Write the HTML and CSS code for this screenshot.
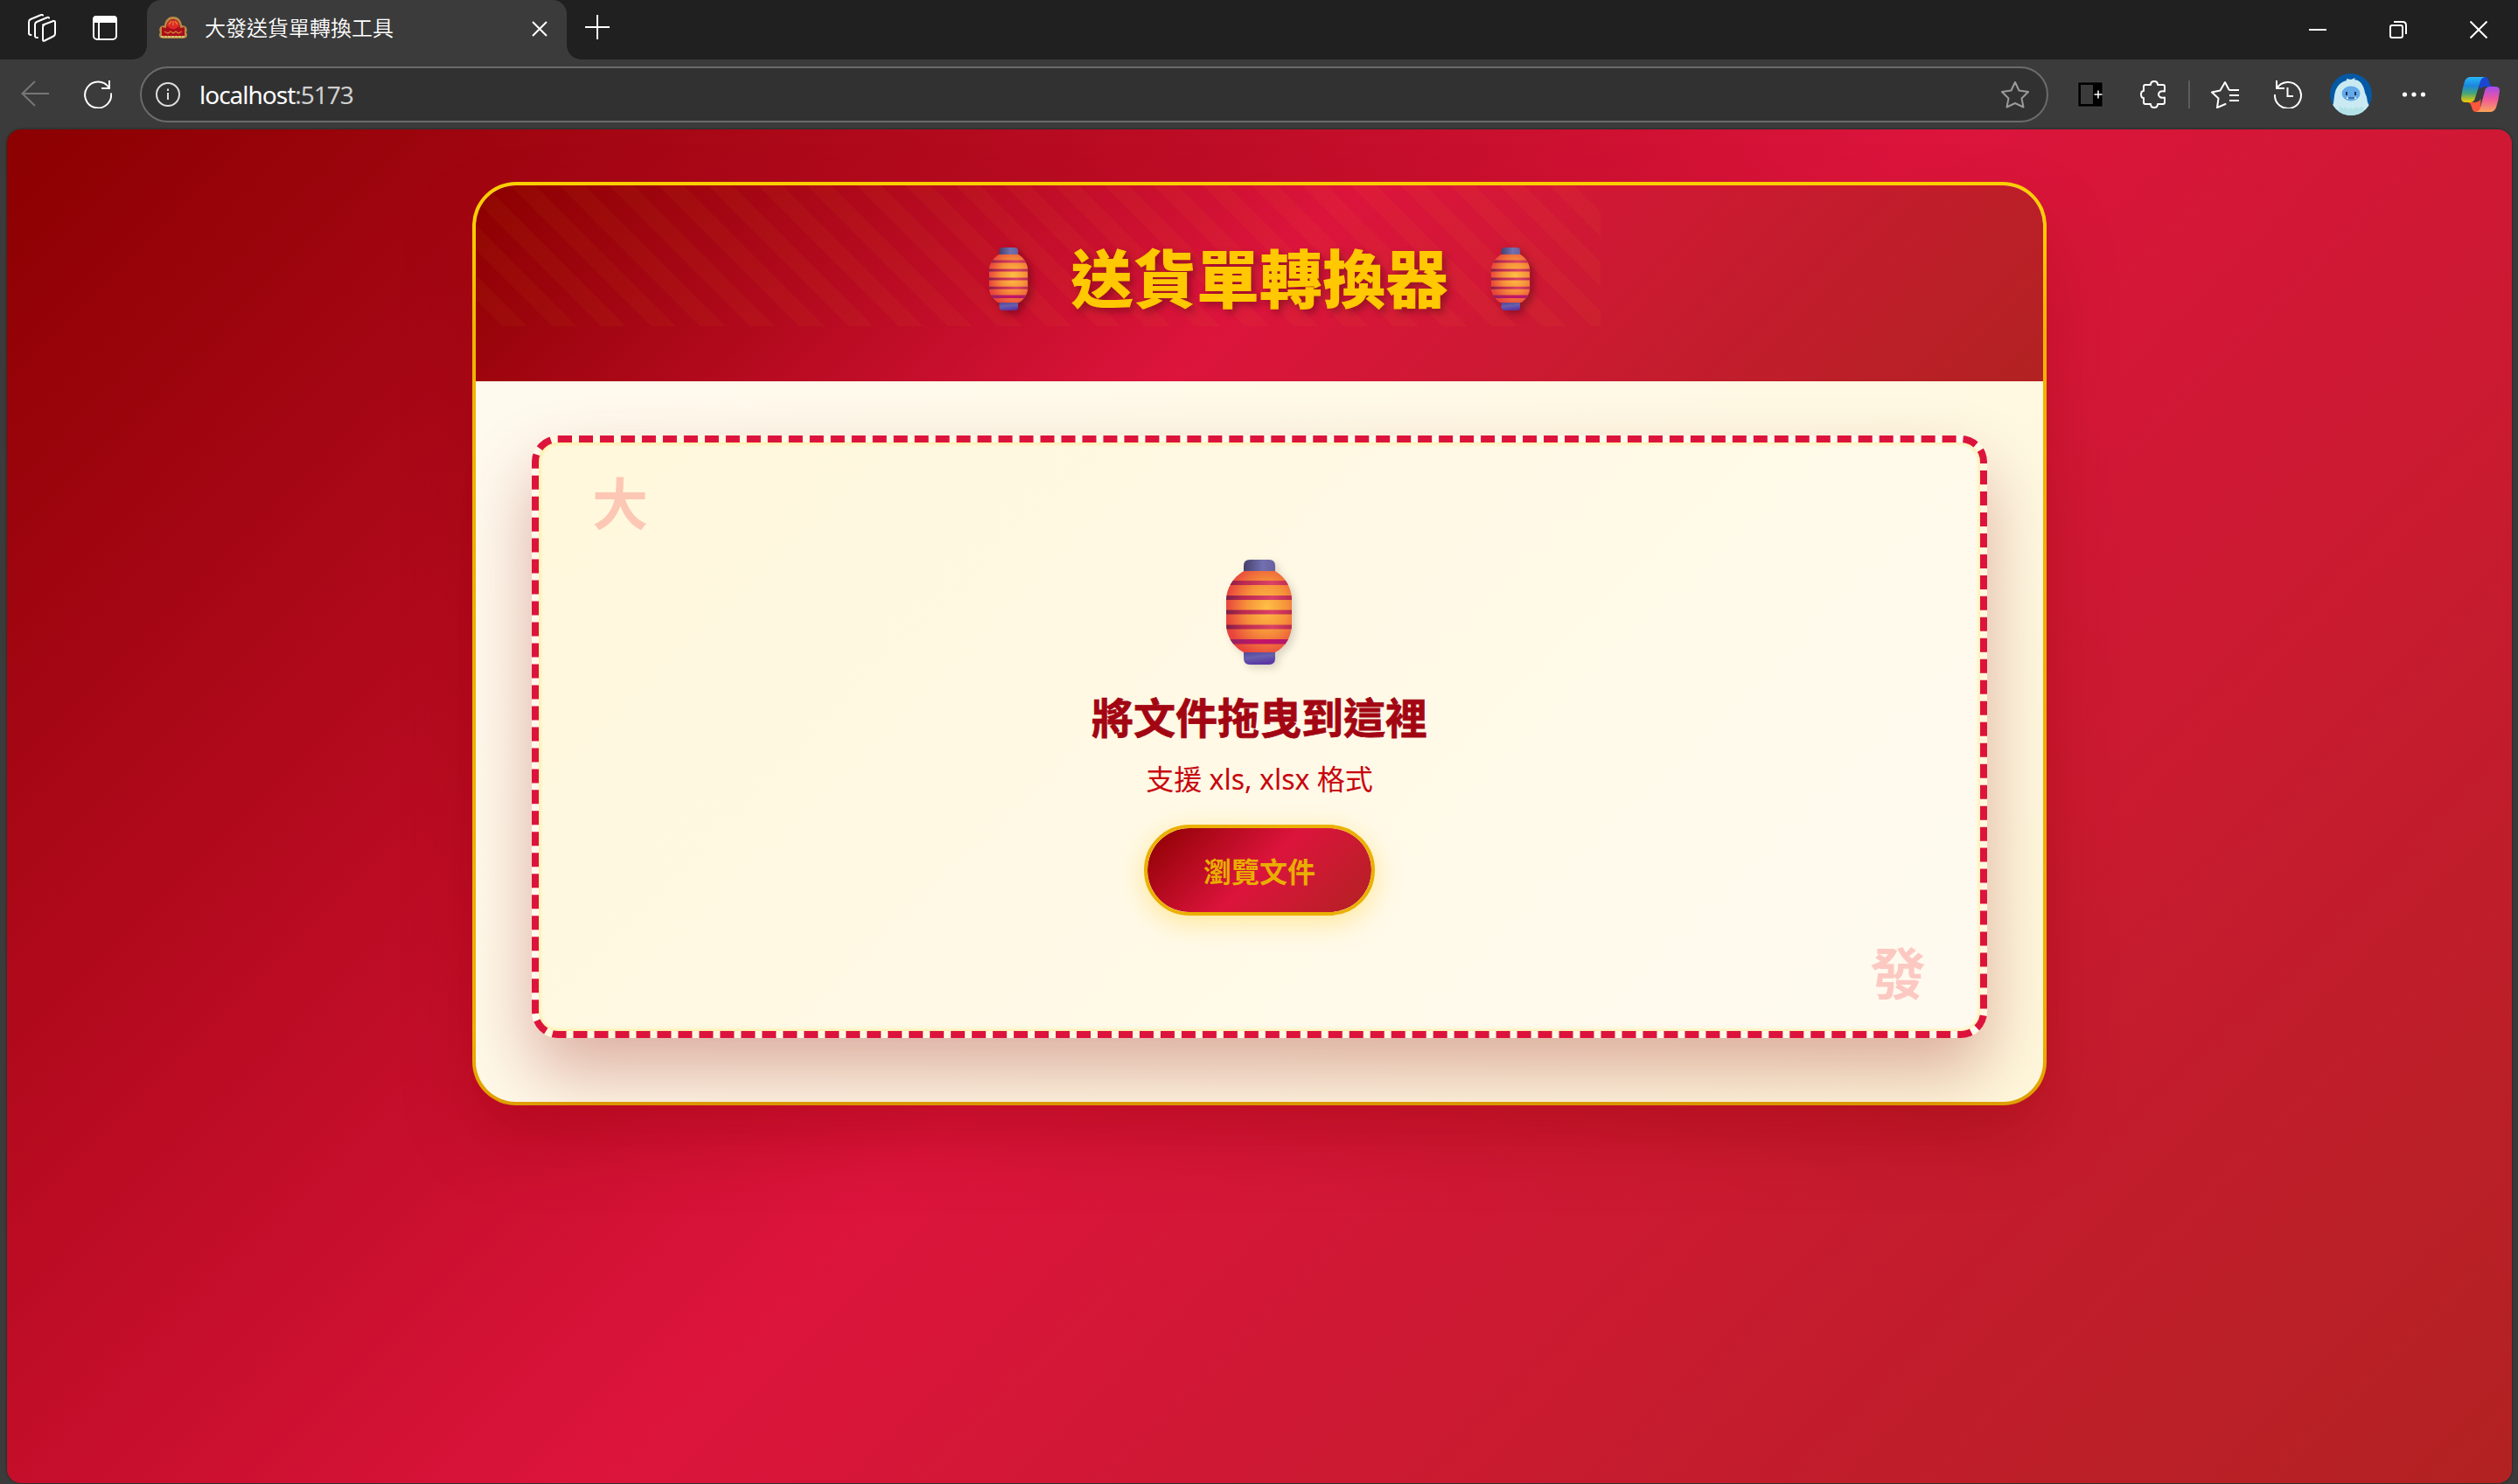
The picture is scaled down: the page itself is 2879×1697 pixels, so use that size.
FILE: index.html
```html
<!DOCTYPE html>
<html lang="zh-Hant">
<head>
<meta charset="utf-8">
<title>大發送貨單轉換工具</title>
<link rel="stylesheet" href="styles.css">
</head>
<body>
<svg width="0" height="0" class="defs" aria-hidden="true">
  <defs>
    <radialGradient id="paper" cx="0.62" cy="0.45" r="0.62"><stop offset="0" stop-color="#ffc045"/><stop offset="0.5" stop-color="#f6923a"/><stop offset="1" stop-color="#e8443c"/></radialGradient>
    <linearGradient id="band"><stop offset="0" stop-color="#7d1f45"/><stop offset="0.25" stop-color="#b82850"/><stop offset="0.7" stop-color="#dc4266"/><stop offset="1" stop-color="#b82a50"/></linearGradient>
    <linearGradient id="bandLow"><stop offset="0" stop-color="#8a2460"/><stop offset="0.5" stop-color="#c41468"/><stop offset="1" stop-color="#b0186c"/></linearGradient>
    <linearGradient id="capTop"><stop offset="0" stop-color="#46406b"/><stop offset="0.6" stop-color="#7270b0"/><stop offset="1" stop-color="#68609f"/></linearGradient>
    <linearGradient id="capLow" x2="0.3" y2="1"><stop offset="0" stop-color="#51449a"/><stop offset="0.5" stop-color="#6860ac"/><stop offset="1" stop-color="#5a36a4"/></linearGradient>
    <clipPath id="body"><path d="M20 13h36C68 20 75 33 75 46v28c0 13-7 26-19 32H20C8 100 0 87 0 74V46C0 33 8 20 20 13z"/></clipPath>
    <symbol id="lantern" viewBox="0 0 75 120">
      <path d="M20 14V7q0-7 7-7h22q7 0 7 7v7z" fill="url(#capTop)"/>
      <path d="M20 105v8q0 7 7 7h22q7 0 7-7v-8z" fill="url(#capLow)"/>
      <g clip-path="url(#body)">
        <path d="M0 13h75v93H0z" fill="url(#paper)"/>
        <path d="M0 24h75v5H0zM0 41h75v5H0zM0 57.500h75v5H0zM0 74.500h75v5H0z" fill="url(#band)"/>
        <path d="M0 91h75v5.500H0z" fill="url(#bandLow)"/>
      </g>
    </symbol>
  </defs>
</svg>

<div class="tabbar">
  <svg class="i-spaces" width="32" height="32" viewBox="0 0 32 32" fill="none" stroke="#fff" stroke-width="2" stroke-linejoin="round" stroke-linecap="round"><path d="M17 12.500l12-4.500q2-.5 2 1.500v13q0 2-2 3l-10 5q-2 1-2-1V15q0-2 2-3M24 4.500q-.500-1-2-.5l-12 5q-2 1-2 3v13.500q.500 2 3 1.500M17 1.500q-1-1-2-.5L3 6Q1 7 1 9v13q0 2 2.500 2"/></svg>
  <svg class="i-tabs" width="28" height="28" viewBox="0 0 28 28" fill="none" stroke="#fff" stroke-width="2"><rect x="1" y="1" width="26" height="26" rx="4"/><path d="M7 7v20"/><path d="M1 7V4q0-3 3-3h20q3 0 3 3v3z" fill="#fff"/></svg>
  <div class="tab">
    <svg width="32" height="26" viewBox="0 0 32 26"><path d="M1 24q-2-3 0-6-2-4 1-7l4-1C7 3 11 0 16 0s9 3 10 10l4 1q3 3 1 7 2 3 0 6l-4 1H5z" fill="#b98a44"/><path d="M3 22V12l5 1C8 6 12 3 16 3s8 3 8 10l5-1v10z" fill="#a80f1a"/><path d="M9 11q0-7 7-7t7 7l-5 3h-4z" fill="#df2a26"/><path d="M11 9l3-4M16 10V5M21 9l-3-4M6 17l4 2 3-2 3 2 3-2 3 2 4-2" stroke="#d9803c" stroke-width="1.300" fill="none"/><path d="M2 23h28" stroke="#d8c070" stroke-width="2" stroke-dasharray="3 1"/></svg>
    <span class="tab-title">大發送貨單轉換工具</span>
    <svg width="18" height="18" viewBox="0 0 18 18" stroke="#fff" stroke-width="2"><path d="M1 1l16 16M17 1L1 17"/></svg>
  </div>
  <svg class="i-plus" width="28" height="28" viewBox="0 0 28 28" stroke="#fff" stroke-width="2"><path d="M14 0v28M0 14h28"/></svg>
  <div class="window-buttons">
    <svg width="20" height="20" viewBox="0 0 20 20" stroke="#fff" stroke-width="2"><path d="M0 10h20"/></svg>
    <svg width="20" height="20" viewBox="0 0 20 20" fill="none" stroke="#fff" stroke-width="2"><rect x="1" y="5" width="14" height="14" rx="2"/><path d="M5 1h10q4 0 4 4v10"/></svg>
    <svg width="20" height="20" viewBox="0 0 20 20" stroke="#fff" stroke-width="2"><path d="M.5.5l19 19M19.500.5l-19 19"/></svg>
  </div>
</div>

<div class="toolbar">
  <svg class="i-back" width="32" height="32" viewBox="0 0 32 32" fill="none" stroke="#777" stroke-width="2"><path d="M32 15H1M16 1L1.500 15 16 29"/></svg>
  <svg class="i-reload" width="32" height="32" viewBox="0 0 32 32" fill="none" stroke="#fff" stroke-width="2"><path d="M31 14.500A15 15 0 1 1 28.500 8M29 0v9h-9"/></svg>
  <div class="address">
    <svg width="28" height="28" viewBox="0 0 28 28" fill="none" stroke="#ddd" stroke-width="2"><circle cx="14" cy="14" r="13"/><path d="M14 12v8M14 7.500v2.500"/></svg>
    <span class="url">localhost<span class="port">:5173</span></span>
    <svg width="34" height="32" viewBox="0 0 34 32" fill="none" stroke="#9a9a9a" stroke-width="2" stroke-linejoin="round"><path d="M17 2l4.500 9.500L32 13l-7.500 7.500 2 10L17 26l-9.500 4.500 2-10L2 13l10.500-1.500z"/></svg>
  </div>
  <svg class="i-ext" width="32" height="32" viewBox="0 0 32 32"><rect x="2" y="2" width="28" height="28" fill="#000" stroke="#555" stroke-width=".5"/><rect x="5" y="5" width="14" height="22" fill="#3b3b3b"/><path d="M20.500 16h9M25 11.500v9" stroke="#fff" stroke-width="1.500"/></svg>
  <svg class="i-puzzle" width="32" height="32" viewBox="-1 0 32 32" fill="none" stroke="#fff" stroke-width="2" stroke-linejoin="round"><path d="M6 5h6c0-2.500 1.500-4 4-4s4 1.500 4 4h6q2 0 2 2v5.500c-4-1-7 .5-7 3.500s3 4.500 7 3.500V25q0 2-2 2h-6c0 2.500-1.500 4-4 4s-4-1.500-4-4H6q-2 0-2-2v-5c-2 0-3-2-3-4s1-4 3-4V7q0-2 2-2z"/></svg>
  <span class="divider"></span>
  <svg class="i-fav" width="32" height="32" viewBox="0 0 32 32" fill="none" stroke="#fff" stroke-width="2" stroke-linejoin="round" stroke-linecap="round"><path d="M16.500 27L7 31l1.500-10.500L1 13.500l9.500-2L16 2l4.500 8.500"/><path d="M21 11h11M21 17h11M21 23h11" stroke-linecap="butt"/></svg>
  <svg class="i-history" width="32" height="32" viewBox="0 0 32 32" fill="none" stroke="#fff" stroke-width="2"><path d="M3 9.500A15 15 0 1 1 1 16M3 0v9h9M15.500 8v10H22"/></svg>
  <svg class="i-avatar" width="48" height="48" viewBox="0 0 48 48"><defs><clipPath id="av"><circle cx="24" cy="24" r="24"/></clipPath></defs><g clip-path="url(#av)"><path d="M0 0h48v48H0z" fill="#0559a4"/><path d="M16 9l3-1 0-2 5 1 5-2-1 2 4 1c5 3 7 8 8 14l2 5 1 6 3 6v9H2v-9l2-5 1-8c1-7 3-13 11-17z" fill="#c9eaf2"/><path d="M9 48l2-11 4 3 3-2 3 3 3-2 3 2 3-3 3 2 4-3 3 11z" fill="#b2e2e6"/><ellipse cx="24" cy="23" rx="10.500" ry="8.500" fill="#64a9e8"/><path d="M19 21v4M29 21v4" stroke="#16345c" stroke-width="2"/><path d="M21 28h7" stroke="#16345c"/><path d="M19 29l1-3 1 3zM28 29l1-3 1 3z" fill="#fff"/></g></svg>
  <svg class="i-dots" width="32" height="32" viewBox="0 0 32 32" fill="#fff"><circle cx="5.500" cy="16" r="2.600"/><circle cx="16" cy="16" r="2.600"/><circle cx="26.500" cy="16" r="2.600"/></svg>
  <svg class="i-copilot" width="48" height="44" viewBox="0 0 48 44"><defs><linearGradient id="ca" x2="0" y2="1"><stop offset="0" stop-color="#27b7fa"/><stop offset=".35" stop-color="#1a86dd"/><stop offset=".65" stop-color="#45a678"/><stop offset="1" stop-color="#f9cb00"/></linearGradient><linearGradient id="cb" x2="0" y2="1"><stop offset="0" stop-color="#a44bee"/><stop offset=".5" stop-color="#f0599a"/><stop offset="1" stop-color="#fba358"/></linearGradient></defs><path d="M24 2h5q3.500 0 4.500 4l1 3q1 4 5 4h-9q-6 0-8 4z" fill="#1a46d0"/><path d="M24 42h-5q-3.500 0-4.500-4l-1-3q-1-4-5-4h8q6 0 8-4z" fill="#f9583c"/><path d="M13 2h16q-4 1-5 5l-6 19q-1 5-6 5H7q-5 0-5-5Q3 16 6 7q2-5 7-5z" fill="url(#ca)"/><path d="M35 42H19q4-1 5-5l5-19q1-5 6-5h6q5 0 5 5-1 10-4 19-2 5-7 5z" fill="url(#cb)"/></svg>
</div>

<main class="page">
  <section class="card">
    <header class="card-header">
      <div class="stripes"></div>
      <h1><svg class="lamp" width="46" height="72"><use href="#lantern"/></svg><span>送貨單轉換器</span><svg class="lamp" width="46" height="72"><use href="#lantern"/></svg></h1>
    </header>
    <div class="card-body">
      <div class="dropzone">
        <span class="mark mark-start">大</span>
        <span class="mark mark-end">發</span>
        <svg class="lamp-big" width="75" height="120"><use href="#lantern"/></svg>
        <h2>將文件拖曳到這裡</h2>
        <p>支援 xls, xlsx 格式</p>
        <button type="button">瀏覽文件</button>
      </div>
    </div>
  </section>
</main>
</body>
</html>
```
FILE: styles.css
```css
* { box-sizing: border-box; }

body {
  margin: 0;
  height: 1697px;
  display: flex;
  flex-direction: column;
  background: #3b3b3b;
  font-family: "Noto Sans", "Noto Sans CJK TC", sans-serif;
  overflow: hidden;
}

.defs { position: absolute; }
svg { display: block; flex: none; }

/* Browser chrome */
.tabbar {
  flex: none;
  height: 68px;
  display: flex;
  align-items: flex-start;
  background: #202020;
}
.i-spaces { margin: 16px 0 0 32px; }
.i-tabs { margin: 18px 0 0 42px; }
.tab {
  position: relative;
  width: 480px;
  height: 68px;
  margin-left: 34px;
  padding: 0 22px 4px 14px;
  display: flex;
  align-items: center;
  background: #3b3b3b;
  border-radius: 16px 16px 0 0;
}
.tab::before,
.tab::after {
  content: "";
  position: absolute;
  bottom: 0;
  width: 16px;
  height: 16px;
}
.tab::before { left: -16px; background: radial-gradient(circle at 0 0, transparent 15.5px, #3b3b3b 16px); }
.tab::after { right: -16px; background: radial-gradient(circle at 100% 0, transparent 15.5px, #3b3b3b 16px); }
.tab-title {
  flex: 1;
  margin: 0 0 2px 20px;
  font: 24px/32px "Noto Sans CJK TC", sans-serif;
  font-weight: 350;
  color: #fff;
}
.tab > svg:last-child { margin-top: 2px; }
.i-plus { margin: 17px 0 0 21px; }
.window-buttons {
  margin: 24px 35px 0 auto;
  display: flex;
  gap: 72px;
}

.toolbar {
  flex: none;
  height: 80px;
  padding-left: 24px;
  display: flex;
  align-items: center;
}
.i-reload { margin-left: 40px; }
.address {
  width: 2182px;
  height: 64px;
  margin-left: 32px;
  padding: 0 19px 0 16px;
  display: flex;
  align-items: center;
  background: #313131;
  border: 2px solid #6b6b6b;
  border-radius: 32px;
}
.url {
  flex: 1;
  margin-left: 22px;
  font-size: 28px;
  line-height: 40px;
  letter-spacing: -1px;
  color: #fff;
}
.port { color: #cfcfcf; }
.i-ext { margin-left: 32px; }
.i-puzzle { margin-left: 40px; }
.divider { width: 2px; height: 32px; margin: 0 24px; background: #5c5c5c; }
.i-history { margin-left: 40px; }
.i-avatar { margin-left: 32px; }
.i-dots { margin-left: 32px; }
.i-copilot { margin-left: 36px; }

/* Page */
.page {
  flex: none;
  height: 1548px;
  margin: 0 7px 0 8px;
  padding-top: 60px;
  display: flex;
  justify-content: center;
  align-items: flex-start;
  border-radius: 16px;
  overflow: hidden;
  background: linear-gradient(135deg, #8b0000 0%, #dc143c 50%, #b22222 100%);
  box-shadow: 0 0 3px rgba(0, 0, 0, .5);
}

.card {
  width: 1800px;
  height: 1056px;
  border: 4px solid transparent;
  border-radius: 50px;
  background:
    linear-gradient(135deg, #fffaf0, #fff8dc) padding-box,
    linear-gradient(#fbce00 0, #fbce00 40px, #efb500 170px, #edb400 970px, #e0a000 1054px) border-box;
  box-shadow: 0 40px 80px rgba(139, 0, 0, .3);
}

.card-header {
  position: relative;
  height: 224px;
  padding-top: 71px;
  border-radius: 46px 46px 0 0;
  overflow: hidden;
  background: linear-gradient(135deg, #8b0000 0%, #dc143c 50%, #b22222 100%);
}
.stripes {
  position: absolute;
  left: 0;
  top: 0;
  width: 1286px;
  height: 161px;
  background: repeating-linear-gradient(45deg,
    rgba(255, 215, 0, .035) 0 1.6px,
    transparent 1.6px 21.6px,
    rgba(255, 215, 0, .035) 21.6px 40px);
}
h1 {
  position: relative;
  margin: 0;
  display: flex;
  justify-content: center;
  gap: 48px;
  font: 900 72px/72px "Noto Sans CJK TC", sans-serif;
  color: #ffc800;
  text-shadow: 4px 4px 8px rgba(0, 0, 0, .3);
}
h1 span { margin-top: -4px; }
.lamp { filter: drop-shadow(4px 4px 4px rgba(0, 0, 0, .3)); }

.card-body { padding: 62px 64px 73px; }
.dropzone {
  position: relative;
  height: 689px;
  padding-top: 134px;
  display: flex;
  flex-direction: column;
  align-items: center;
  border: 8px dashed #dc143c;
  border-radius: 30px;
  background: linear-gradient(135deg, #fff8dc, #fffaf0);
  box-shadow: 0 40px 80px rgba(139, 0, 0, .3), inset 0 0 4px 1px rgba(255, 215, 0, .4);
}
.mark {
  position: absolute;
  font: 700 64px/64px "Noto Sans CJK TC", sans-serif;
  color: #f50a14;
  opacity: .2;
}
.mark-start { left: 61px; top: 34px; }
.mark-end { right: 62px; bottom: 38px; }
.lamp-big { margin-right: 1px; filter: drop-shadow(4px 4px 5px rgba(0, 0, 0, .15)); }
h2 {
  margin: 26px 0 0;
  font: 700 48px/64px "Noto Sans CJK TC", sans-serif;
  color: #a30613;
  -webkit-text-stroke: 0.8px #a30613;
}
p {
  margin: 17px 0 0;
  font: 32px/48px "Noto Sans", "Noto Sans CJK TC", sans-serif;
  color: #c8050e;
}
button {
  width: 264px;
  height: 104px;
  margin-top: 28px;
  padding: 0;
  border: 4px solid #ebb000;
  border-radius: 52px;
  background: linear-gradient(135deg, #8b0000 0%, #dc143c 50%, #b22222 100%) padding-box;
  box-shadow: 0 8px 30px rgba(255, 200, 0, .35);
  font: 700 32px/40px "Noto Sans CJK TC", sans-serif;
  color: #e9ae00;
}
```
